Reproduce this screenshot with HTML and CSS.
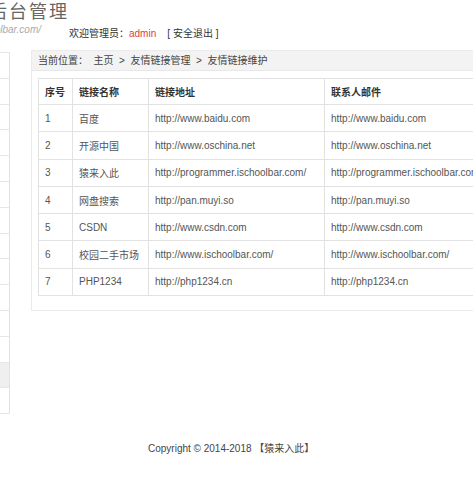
FILE: index.html
```html
<!DOCTYPE html>
<html lang="zh-CN">
<head>
<meta charset="utf-8">
<title>后台管理</title>
<link rel="stylesheet" href="styles.css">
</head>
<body>
<div class="header">
  <div class="logo">
    <div class="logo-title">后台管理</div>
    <div class="logo-url">www.ischoolbar.com/</div>
  </div>
  <div class="welcome">欢迎管理员：<span class="admin">admin</span>&nbsp;&nbsp;&nbsp; [ 安全退出 ]</div>
</div>
<div class="layout">
  <ul class="sidebar">
    <li></li><li></li><li></li><li></li><li></li><li></li><li></li>
    <li></li><li></li><li></li><li></li><li></li><li class="active"></li><li></li>
  </ul>
  <div class="main">
    <div class="panel">
      <div class="crumb">当前位置：&nbsp; 主页&nbsp; &gt; &nbsp;友情链接管理 &nbsp;&gt; &nbsp;友情链接维护</div>
      <div class="panel-body">
        <table class="grid">
          <thead>
            <tr><th class="c1">序号</th><th class="c2">链接名称</th><th class="c3">链接地址</th><th class="c4">联系人邮件</th></tr>
          </thead>
          <tbody>
            <tr><td>1</td><td>百度</td><td>http://www.baidu.com</td><td>http://www.baidu.com</td></tr>
            <tr><td>2</td><td>开源中国</td><td>http://www.oschina.net</td><td>http://www.oschina.net</td></tr>
            <tr><td>3</td><td>猿来入此</td><td>http://programmer.ischoolbar.com/</td><td>http://programmer.ischoolbar.com/</td></tr>
            <tr><td>4</td><td>网盘搜索</td><td>http://pan.muyi.so</td><td>http://pan.muyi.so</td></tr>
            <tr><td>5</td><td>CSDN</td><td>http://www.csdn.com</td><td>http://www.csdn.com</td></tr>
            <tr><td>6</td><td>校园二手市场</td><td>http://www.ischoolbar.com/</td><td>http://www.ischoolbar.com/</td></tr>
            <tr><td>7</td><td>PHP1234</td><td>http://php1234.cn</td><td>http://php1234.cn</td></tr>
          </tbody>
        </table>
      </div>
    </div>
  </div>
</div>
<div class="footer">Copyright © 2014-2018 【猿来入此】</div>
</body>
</html>
```

FILE: styles.css
```css
html, body {
  margin: 0;
  padding: 0;
  background: #fff;
}
body {
  width: 473px;
  height: 477px;
  overflow: hidden;
  font-family: "Liberation Sans", "Noto Sans CJK SC", sans-serif;
  font-size: 10px;
  color: #555;
}
.header {
  display: flex;
  height: 50px;
}
.logo {
  flex: 0 0 auto;
  width: 130px;
  margin-left: -61px;
}
.logo-title {
  font-size: 18px;
  letter-spacing: 2px;
  line-height: 24px;
  color: #666;
  text-align: right;
}
.logo-url {
  font-size: 10px;
  line-height: 12px;
  color: #aaa;
  font-style: italic;
  text-align: right;
  padding-right: 28px;
}
.welcome {
  margin-top: 27px;
  line-height: 14px;
  color: #333;
  white-space: nowrap;
}
.admin {
  color: #e4393c;
}
.layout {
  display: flex;
  align-items: flex-start;
}
.sidebar {
  list-style: none;
  margin: 2px 0 0 -140px;
  padding: 0;
  width: 150px;
  flex: 0 0 150px;
  box-sizing: border-box;
  border-right: 1px solid #e2e2e2;
  border-top: 1px solid #e6e6e6;
}
.sidebar li {
  height: 24.8px;
  border-bottom: 1px solid #e6e6e6;
}
.sidebar li.active {
  background: #efefef;
}
.main {
  flex: 0 0 auto;
  margin-left: 21px;
}
.panel {
  width: 520px;
  border: 1px solid #ebebeb;
}
.crumb {
  height: 19px;
  line-height: 19px;
  padding-left: 6px;
  background: #f3f3f3;
  border-bottom: 1px solid #e8e8e8;
  color: #444;
  white-space: nowrap;
}
.panel-body {
  padding: 7px 0 14px 6px;
}
.grid {
  border-collapse: collapse;
  width: 510px;
  table-layout: fixed;
}
.grid th, .grid td {
  border: 1px solid #e2e2e2;
  padding: 0 6px;
  text-align: left;
  white-space: nowrap;
  overflow: hidden;
}
.grid th {
  height: 25px;
  font-weight: bold;
  color: #333;
}
.grid td {
  height: 26.3px;
  color: #555;
}
.c1 { width: 21px; }
.c2 { width: 63px; }
.c3 { width: 163px; }
.footer {
  margin-top: 28px;
  padding-left: 148px;
  line-height: 14px;
  color: #444;
  white-space: nowrap;
}
```
